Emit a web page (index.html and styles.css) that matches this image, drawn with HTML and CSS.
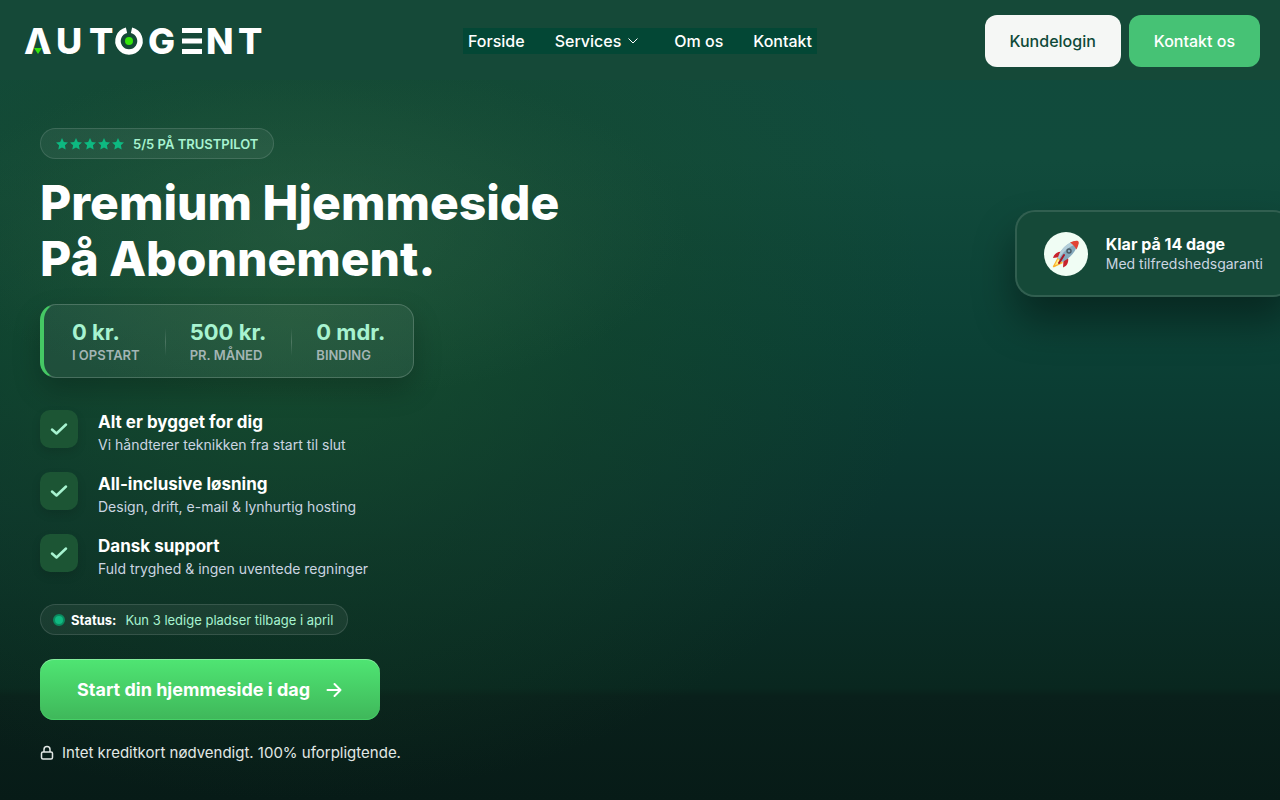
FILE: index.html
```html
<!DOCTYPE html>
<html lang="da">

<head>
    <meta charset="UTF-8">
    <meta name="viewport" content="width=device-width, initial-scale=1.0">
    <title>Autogent</title>
    <link rel="stylesheet" href="styles.css">
</head>

<body>
    <header class="header">
        <a class="logo" href="#" aria-label="Autogent">
            <svg width="244" height="50" viewBox="0 0 244 50">
                <g class="logo-letters">
                    <text x="0" y="38">Λ</text>
                    <text x="32" y="38">U</text>
                    <text x="65" y="38">T</text>
                    <text x="124" y="38">G</text>
                    <text x="182" y="38">N</text>
                    <text x="214" y="38">T</text>
                </g>
                <path d="M10 32h8l-4 6z" fill="#35e60b" />
                <path d="M102.500 14.300a11 11 0 1 0 5 0" fill="none" stroke="#fff" stroke-width="5.500" />
                <circle cx="105" cy="25" r="4" fill="#35e60b" />
                <path d="M158 12h20v5h-20zM158 22.500h20v5h-20zM158 33h20v5h-20z" fill="#fff" />
            </svg>
        </a>
        <nav class="nav">
            <a href="#">Forside</a>
            <a href="#" class="has-menu">Services
                <svg width="12" height="8" viewBox="0 0 12 8">
                    <path d="M1.500 1.500l4.500 4.500 4.500-4.500" fill="none" stroke="currentColor" />
                </svg>
            </a>
            <a href="#">Om os</a>
            <a href="#">Kontakt</a>
        </nav>
        <div class="header-actions">
            <a class="btn btn-light" href="#">Kundelogin</a>
            <a class="btn btn-green" href="#">Kontakt os</a>
        </div>
    </header>

    <main class="hero">
        <div class="hero-content">
            <div class="pill trust">
                <svg width="68" height="12" viewBox="0 0 68 12" fill="#0db981">
                    <defs>
                        <path id="star" d="M6 0l1.800 3.900 4.200.5-3.100 2.900.8 4.300L6 9.500l-3.700 2.100.8-4.300L0 4.400l4.200-.5z" />
                    </defs>
                    <use href="#star" />
                    <use href="#star" x="14" />
                    <use href="#star" x="28" />
                    <use href="#star" x="42" />
                    <use href="#star" x="56" />
                </svg>
                <span>5/5 PÅ TRUSTPILOT</span>
            </div>

            <h1>Premium Hjemmeside<br>På Abonnement.</h1>

            <div class="stats">
                <div class="stat">
                    <strong>0 kr.</strong>
                    <span>I OPSTART</span>
                </div>
                <div class="stat">
                    <strong>500 kr.</strong>
                    <span>PR. MÅNED</span>
                </div>
                <div class="stat">
                    <strong>0 mdr.</strong>
                    <span>BINDING</span>
                </div>
            </div>

            <ul class="features">
                <li>
                    <span class="check">
                        <svg width="18" height="14" viewBox="0 0 18 14"><path d="M2 7.500l4.500 4L16 2.500" /></svg>
                    </span>
                    <div>
                        <h2>Alt er bygget for dig</h2>
                        <p>Vi håndterer teknikken fra start til slut</p>
                    </div>
                </li>
                <li>
                    <span class="check">
                        <svg width="18" height="14" viewBox="0 0 18 14"><path d="M2 7.500l4.500 4L16 2.500" /></svg>
                    </span>
                    <div>
                        <h2>All-inclusive løsning</h2>
                        <p>Design, drift, e-mail &amp; lynhurtig hosting</p>
                    </div>
                </li>
                <li>
                    <span class="check">
                        <svg width="18" height="14" viewBox="0 0 18 14"><path d="M2 7.500l4.500 4L16 2.500" /></svg>
                    </span>
                    <div>
                        <h2>Dansk support</h2>
                        <p>Fuld tryghed &amp; ingen uventede regninger</p>
                    </div>
                </li>
            </ul>

            <div class="pill status">
                <span class="dot"></span>
                <strong>Status:</strong>
                <span>Kun 3 ledige pladser tilbage i april</span>
            </div>

            <a class="cta" href="#">
                Start din hjemmeside i dag
                <svg width="16" height="16" viewBox="0 0 16 16">
                    <path d="M1.500 8h13M8.500 2l6 6-6 6" fill="none" stroke="currentColor" stroke-width="2" stroke-linecap="round" stroke-linejoin="round" />
                </svg>
            </a>

            <p class="note">
                <svg width="14" height="16" viewBox="0 0 14 16" fill="none" stroke="currentColor" stroke-width="1.500">
                    <rect x="1.500" y="7" width="11" height="7" rx="1.500" />
                    <path d="M4 7V4.500a3 3 0 0 1 6 0V7" />
                </svg>
                Intet kreditkort nødvendigt. 100% uforpligtende.
            </p>
        </div>

        <div class="hero-visual">
            <div class="float-card">
                <span class="rocket">
                    <svg width="28" height="28" viewBox="0 0 28 28">
                        <path d="M6 17l-5 9c-.5 1 .3 1.500 1.200 1.200L11 23z" fill="#fbb52c" />
                        <path d="M6 19l-3 6c1 0 4-1 6-3z" fill="#fff08a" />
                        <path d="M10 12c-4-1-8 2-9 6l7-1z" fill="#c8232c" />
                        <path d="M16 18c1 4-1 8-5 9.500l.5-8z" fill="#c8232c" />
                        <path d="M6 18c2-8 8-14 17-17 2.500-.5 3.500.5 3 3-3 9-9 15-16 18z" fill="#84a9bc" />
                        <path d="M6 18c2-8 8-14 14-16l2 3C15 8 10 13 7 19z" fill="#b3ced9" />
                        <path d="M18 2.500C20 1.500 23 .5 25 .7c1.600.2 2 1.300 1.700 2.800-.4 2-1.200 4-2.200 6C23 6.500 21 4.500 18 2.500z" fill="#e34334" />
                        <circle cx="17" cy="11" r="2.700" fill="#4a5962" />
                        <circle cx="17" cy="11" r="1.300" fill="#84a9bc" />
                        <path d="M12 15l-5 8" stroke="#a91928" stroke-width="2" stroke-linecap="round" />
                    </svg>
                </span>
                <div>
                    <strong>Klar på 14 dage</strong>
                    <p>Med tilfredshedsgaranti</p>
                </div>
            </div>
        </div>
    </main>
</body>

</html>
```
FILE: styles.css
```css
* {
    box-sizing: border-box;
    margin: 0;
    padding: 0;
}

body {
    min-height: 100vh;
    font-family: "Inter", sans-serif;
    color: #fff;
    background:
        radial-gradient(ellipse 380px 170px at 310px 230px, rgba(50, 100, 75, 0.4), rgba(50, 100, 75, 0)),
        radial-gradient(ellipse 640px 480px at 290px 320px, rgba(28, 84, 44, 0.65), rgba(24, 72, 38, 0.35) 50%, rgba(20, 60, 36, 0)),
        linear-gradient(180deg, #114a3c 0%, #114b3c 20%, #0b4035 44%, #0b332d 65%, #09271f 86%, #09201b 87%, #071b17 100%);
}

a {
    color: inherit;
    text-decoration: none;
}

.header {
    display: grid;
    grid-template-columns: 1fr auto 1fr;
    align-items: center;
    padding: 15px 20px 13px;
    background: #154938;
}

.logo {
    padding-left: 4px;
    line-height: 0;
}

.logo-letters {
    fill: #fff;
    font-size: 36px;
    font-weight: 800;
}

.nav {
    display: flex;
    gap: 30px;
    padding: 0 5px;
    background: #034735;
    font-size: 16px;
    font-weight: 500;
    line-height: 26px;
}

.has-menu {
    display: flex;
    align-items: center;
    gap: 6px;
    padding-right: 5px;
}

.header-actions {
    display: flex;
    justify-content: flex-end;
    gap: 8px;
}

.btn {
    padding: 14px 25px;
    border-radius: 12px;
    font-size: 16px;
    font-weight: 500;
    line-height: 24px;
}

.btn-light {
    background: #f5f7f5;
    color: #0f4a39;
}

.btn-green {
    background: #46c275;
}

.hero {
    display: grid;
    grid-template-columns: 1fr 1fr;
    padding: 48px 40px 35px;
    overflow: hidden;
}

.hero-content {
    display: flex;
    flex-direction: column;
    align-items: flex-start;
}

.pill {
    display: flex;
    align-items: center;
    height: 31px;
    border: 1px solid rgba(255, 255, 255, 0.12);
    border-radius: 16px;
    background: rgba(255, 255, 255, 0.06);
    font-size: 13px;
}

.trust {
    gap: 9px;
    padding: 0 15px;
    color: #a7f3d0;
    font-weight: 600;
}

h1 {
    margin: 16px 0 17px;
    font-size: 48px;
    font-weight: 800;
    line-height: 56px;
    white-space: nowrap;
}

.stats {
    display: flex;
    padding: 13px 28px 12px;
    border: 1px solid rgba(255, 255, 255, 0.18);
    border-left: 4px solid #45c864;
    border-radius: 16px;
    background: rgba(255, 255, 255, 0.06);
    box-shadow: 0 12px 28px rgba(0, 0, 0, 0.22);
}

.stat + .stat {
    margin-left: 25px;
    padding-left: 25px;
    background: linear-gradient(180deg, transparent, rgba(255, 255, 255, 0.18), transparent) no-repeat 0 10px / 1px 28px;
}

.stat strong,
.stat span {
    display: block;
}

.stat strong {
    color: #a7f3d0;
    font-size: 22px;
    font-weight: 700;
    line-height: 28px;
}

.stat span {
    color: #a3b5b4;
    font-size: 13px;
    font-weight: 600;
    line-height: 19px;
}

.features {
    display: grid;
    gap: 16px;
    margin: 32px 0 24px;
    list-style: none;
}

.features li {
    display: flex;
    gap: 20px;
}

.check {
    display: grid;
    place-items: center;
    width: 38px;
    height: 38px;
    border-radius: 10px;
    background: #1c5534;
    box-shadow: 0 4px 10px rgba(0, 0, 0, 0.12);
}

.check path {
    fill: none;
    stroke: #a7f3d0;
    stroke-width: 2.5;
    stroke-linecap: round;
    stroke-linejoin: round;
}

.features h2 {
    font-size: 17px;
    font-weight: 700;
    line-height: 24px;
}

.features p {
    color: #cbd5e1;
    font-size: 14px;
    line-height: 22px;
}

.status {
    gap: 6px;
    padding: 0 14px 0 12px;
    color: #a7f3d0;
}

.status strong {
    margin-right: 3px;
    color: #fff;
}

.dot {
    width: 12px;
    height: 12px;
    border: 2px solid #0b8a5f;
    border-radius: 50%;
    background: #10b981;
}

.cta {
    display: flex;
    align-items: center;
    gap: 16px;
    height: 61px;
    margin: 24px 0 21px;
    padding: 0 38px 0 37px;
    border-radius: 14px;
    background: linear-gradient(180deg, #4fe573, #3fb75a);
    box-shadow: inset 0 1px 0 rgba(255, 255, 255, 0.3), inset 0 -1px 0 #46cf66;
    font-size: 18px;
    font-weight: 700;
}

.note {
    display: flex;
    align-items: center;
    gap: 8px;
    color: #e2e8e5;
    font-size: 15px;
    line-height: 24px;
}

.hero-visual {
    display: flex;
    justify-content: flex-end;
    align-items: flex-start;
    padding-top: 82px;
}

/* The card runs out past the right edge of the hero */
.float-card {
    display: flex;
    align-items: center;
    gap: 18px;
    height: 87px;
    margin-right: -53px;
    padding: 0 28px 0 27px;
    border: 2px solid rgba(255, 255, 255, 0.12);
    border-radius: 20px;
    background: #154938;
    box-shadow: 0 24px 40px rgba(0, 0, 0, 0.4);
    white-space: nowrap;
}

.rocket {
    display: grid;
    place-items: center;
    width: 44px;
    height: 44px;
    border-radius: 50%;
    background: #f0fdf4;
}

.float-card strong {
    font-size: 16px;
    line-height: 20px;
}

.float-card p {
    color: #cbd5e1;
    font-size: 14px;
    line-height: 20px;
}
```
